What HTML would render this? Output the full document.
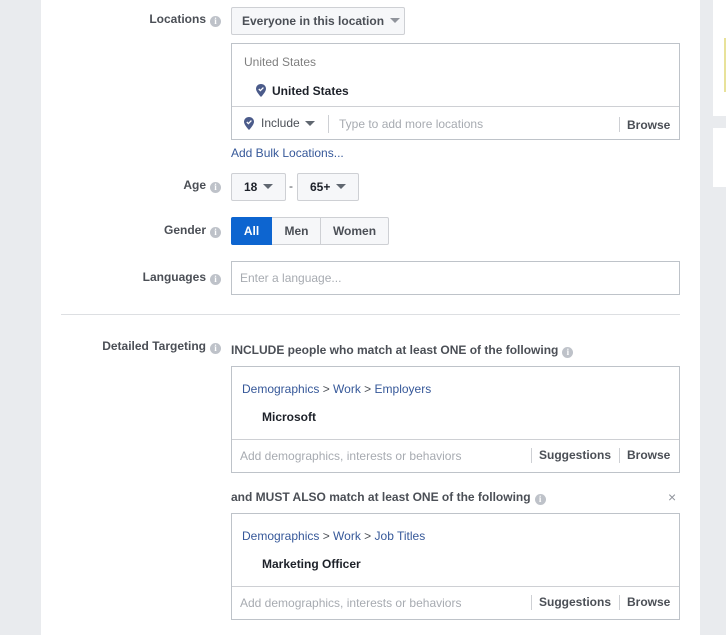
<!DOCTYPE html>
<html><head><meta charset="utf-8"><style>
*{margin:0;padding:0;box-sizing:border-box}
body{width:726px;height:635px;overflow:hidden;background:#e9ebee;font-family:"Liberation Sans",Arial,sans-serif;font-size:12px;color:#1d2129;position:relative}
.a{position:absolute;white-space:nowrap}
.lbl{font-weight:bold;color:#4b4f56;text-align:right}
.i{display:inline-block;width:11px;height:11px;border-radius:50%;background:#bec2c9;color:#fff;font-size:9px;line-height:11px;text-align:center;font-weight:bold;font-family:"Liberation Serif",serif;vertical-align:-1px;margin-left:4px}
.btn{background:#f6f7f9;border:1px solid #ced0d4;border-radius:2px;font-weight:bold;color:#4b4f56}
.box{border:1px solid #bec3c9;background:#fff}
.car{display:inline-block;width:0;height:0;border-left:5px solid transparent;border-right:5px solid transparent;border-top:5px solid #606770;vertical-align:2px;margin-left:6px}
.ph{color:#90949c}
.lnk{color:#365899}
.b{font-weight:bold;color:#4b4f56}
.sep{position:absolute;width:1px;background:#ced0d4}
</style></head><body>
<div class="a" style="left:41px;top:0;width:659px;height:635px;background:#fff"></div>
<div class="a" style="left:713px;top:0;width:13px;height:116px;background:#fff"></div>
<div class="a" style="left:724px;top:38px;width:2px;height:54px;background:#e8e29a"></div>
<div class="a" style="left:713px;top:128px;width:13px;height:59px;background:#fff"></div>

<div class="a lbl" style="left:100px;top:12px;width:121px">Locations<span class="i">i</span></div>
<div class="a btn" style="left:231px;top:7px;width:174px;height:28px;line-height:26px;padding-left:10px">Everyone in this location<span class="car" style="border-top-color:#90949c"></span></div>

<div class="a box" style="left:231px;top:43px;width:449px;height:97px"></div>
<div class="a" style="left:232px;top:106px;width:447px;height:1px;background:#ced0d4"></div>
<div class="a ph" style="left:244px;top:55px;color:#7f7f7f">United States</div>
<svg class="a" style="left:256px;top:84px" width="10" height="13" viewBox="0 0 10 13"><path d="M5 0C2.2 0 0 2.1 0 4.8 0 8 5 13 5 13s5-5 5-8.2C10 2.1 7.8 0 5 0z" fill="#4b5b8a"/><path d="M2.8 5l1.6 1.6 3-3" stroke="#fff" stroke-width="1.3" fill="none"/></svg>
<div class="a" style="left:272px;top:84px;font-weight:bold">United States</div>
<svg class="a" style="left:244px;top:117px" width="10" height="13" viewBox="0 0 10 13"><path d="M5 0C2.2 0 0 2.1 0 4.8 0 8 5 13 5 13s5-5 5-8.2C10 2.1 7.8 0 5 0z" fill="#4b5b8a"/><path d="M2.8 5l1.6 1.6 3-3" stroke="#fff" stroke-width="1.3" fill="none"/></svg>
<div class="a" style="left:261px;top:116px;color:#4b4f56">Include</div>
<div class="a car" style="left:305px;top:121px;margin:0;border-top-color:#606770"></div>
<div class="sep" style="left:328px;top:115px;height:18px"></div>
<div class="a ph" style="left:339px;top:117px;color:#a7abb1">Type to add more locations</div>
<div class="sep" style="left:619px;top:117px;height:15px"></div>
<div class="a b" style="left:627px;top:118px">Browse</div>
<div class="a lnk" style="left:231px;top:146px">Add Bulk Locations...</div>

<div class="a lbl" style="left:100px;top:178px;width:121px">Age<span class="i">i</span></div>
<div class="a btn" style="left:231px;top:173px;width:55px;height:28px;line-height:26px;padding-left:12px;color:#1d2129">18<span class="car"></span></div>
<div class="a" style="left:289px;top:179px;color:#4b4f56">-</div>
<div class="a btn" style="left:297px;top:173px;width:62px;height:28px;line-height:26px;padding-left:12px;color:#1d2129">65+<span class="car"></span></div>

<div class="a lbl" style="left:100px;top:223px;width:121px">Gender<span class="i">i</span></div>
<div class="a btn" style="left:231px;top:217px;width:158px;height:28px"></div>
<div class="a" style="left:231px;top:217px;width:41px;height:28px;background:#0d65d0;border-radius:2px 0 0 2px;color:#fff;font-weight:bold;line-height:28px;text-align:center">All</div>
<div class="a b" style="left:272px;top:217px;width:49px;line-height:28px;text-align:center">Men</div>
<div class="sep" style="left:320px;top:218px;height:26px"></div>
<div class="a b" style="left:321px;top:217px;width:67px;line-height:28px;text-align:center">Women</div>

<div class="a lbl" style="left:100px;top:270px;width:121px">Languages<span class="i">i</span></div>
<div class="a box" style="left:231px;top:261px;width:449px;height:34px"></div>
<div class="a ph" style="left:240px;top:271px;color:#a7abb1">Enter a language...</div>

<div class="a" style="left:61px;top:314px;width:619px;height:1px;background:#dddfe2"></div>

<div class="a lbl" style="left:90px;top:339px;width:131px">Detailed Targeting<span class="i">i</span></div>
<div class="a b" style="left:231px;top:343px">INCLUDE people who match at least ONE of the following<span class="i">i</span></div>
<div class="a box" style="left:231px;top:366px;width:449px;height:107px"></div>
<div class="a" style="left:232px;top:439px;width:447px;height:1px;background:#ced0d4"></div>
<div class="a lnk" style="left:242px;top:382px">Demographics <span style="color:#4b4f56">&gt;</span> Work <span style="color:#4b4f56">&gt;</span> Employers</div>
<div class="a" style="left:262px;top:410px;font-weight:bold">Microsoft</div>
<div class="a ph" style="left:240px;top:449px;color:#a7abb1">Add demographics, interests or behaviors</div>
<div class="sep" style="left:531px;top:448px;height:15px"></div>
<div class="a b" style="left:539px;top:448px">Suggestions</div>
<div class="sep" style="left:619px;top:448px;height:15px"></div>
<div class="a b" style="left:627px;top:448px">Browse</div>

<div class="a b" style="left:231px;top:490px">and MUST ALSO match at least ONE of the following<span class="i">i</span></div>
<div class="a" style="left:668px;top:489px;color:#90949c;font-size:14px">×</div>
<div class="a box" style="left:231px;top:513px;width:449px;height:107px"></div>
<div class="a" style="left:232px;top:586px;width:447px;height:1px;background:#ced0d4"></div>
<div class="a lnk" style="left:242px;top:529px">Demographics <span style="color:#4b4f56">&gt;</span> Work <span style="color:#4b4f56">&gt;</span> Job Titles</div>
<div class="a" style="left:262px;top:557px;font-weight:bold">Marketing Officer</div>
<div class="a ph" style="left:240px;top:596px;color:#a7abb1">Add demographics, interests or behaviors</div>
<div class="sep" style="left:531px;top:595px;height:15px"></div>
<div class="a b" style="left:539px;top:595px">Suggestions</div>
<div class="sep" style="left:619px;top:595px;height:15px"></div>
<div class="a b" style="left:627px;top:595px">Browse</div>
</body></html>
